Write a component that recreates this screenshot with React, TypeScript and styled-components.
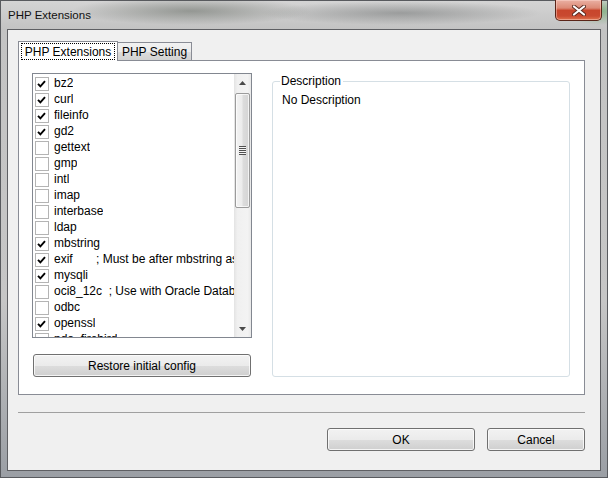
import React from "react";
import styled, { createGlobalStyle } from "styled-components";

const Global = createGlobalStyle`
  html, body { margin: 0; padding: 0; }
  body {
    width: 608px; height: 478px; overflow: hidden;
    font-family: "Liberation Sans", Arial, sans-serif;
    font-size: 12px; color: #000;
  }
  * { box-sizing: border-box; }
`;

const Window = styled.div`
  width: 608px;
  height: 478px;
  display: flex;
  flex-direction: column;
  border: 1px solid #585a5e;
  padding: 0 6px 6px 6px;
  background:
    radial-gradient(ellipse 120px 14px at 190px 10px, rgba(90, 96, 88, 0.5), transparent),
    radial-gradient(ellipse 140px 12px at 400px 12px, rgba(80, 84, 84, 0.4), transparent),
    radial-gradient(ellipse 40px 14px at 600px 10px, rgba(70, 150, 70, 0.5), transparent),
    linear-gradient(180deg, #d4d4d4 0px, #c3c3c3 28px, #c6c6c6 300px, #9a9ea4 478px);
`;

const TitleBar = styled.div`
  height: 28px;
  display: flex;
  align-items: flex-start;
  justify-content: space-between;
`;

const TitleText = styled.div`
  padding: 7px 0 0 1px;
  font-size: 11.5px;
  line-height: 14px;
  color: #111;
`;

const CloseButton = styled.div`
  width: 47px;
  height: 21px;
  margin: -1px -1px 0 0;
  border: 1px solid #5a2418;
  border-top: none;
  border-radius: 0 0 5px 5px;
  background: linear-gradient(180deg, #eab0a3 0%, #dc8a76 40%, #c8462c 52%, #c94a30 80%, #e0754f 100%);
  box-shadow: inset 0 0 0 1px rgba(255, 220, 210, 0.45);
  display: flex;
  align-items: center;
  justify-content: center;
`;

const Client = styled.div`
  flex: 1;
  display: flex;
  flex-direction: column;
  background: #f0f0f0;
  border: 1px solid #5e5f63;
  padding: 11px 15px 19px 10px;
`;

const TabStrip = styled.div`
  display: flex;
  align-items: flex-end;
  height: 20px;
  margin-bottom: -1px;
  position: relative;
  z-index: 1;
`;

const Tab = styled.div<{ $active?: boolean; $w: number }>`
  width: ${(p) => p.$w}px;
  height: ${(p) => (p.$active ? 20 : 18)}px;
  margin-bottom: ${(p) => (p.$active ? 0 : 1)}px;
  border: 1px solid #898c95;
  border-bottom: none;
  ${(p) => (p.$active ? "" : "border-left: none;")}
  background: ${(p) =>
    p.$active
      ? "#ffffff"
      : "linear-gradient(180deg, #f2f2f2 0%, #ebebeb 50%, #dddddd 51%, #d2d2d2 100%)"};
  padding: ${(p) => (p.$active ? "1px 2px 1px 2px" : "0")};
  display: flex;
  align-items: ${(p) => (p.$active ? "stretch" : "center")};
  justify-content: center;
  line-height: 14px;
`;

const FocusRect = styled.div`
  flex: 1;
  border: 1px dotted #000;
  display: flex;
  align-items: center;
  justify-content: center;
  height: 17px;
`;

const TabPanel = styled.div`
  display: flex;
  gap: 20px;
  border: 1px solid #898c95;
  background: #ffffff;
  padding: 12px 14px 17px 13px;
`;

const LeftColumn = styled.div`
  width: 220px;
  display: flex;
  flex-direction: column;
  gap: 16px;
`;

const ListBox = styled.div`
  height: 265px;
  border: 1px solid #828790;
  background: #fff;
  display: flex;
`;

const ListRows = styled.div`
  flex: 1;
  overflow: hidden;
  padding: 1px 0 0 2px;
`;

const Row = styled.div`
  height: 16px;
  display: flex;
  align-items: flex-start;
`;

const CheckBox = styled.div`
  width: 14px;
  height: 14px;
  margin: 2px 5px 0 0;
  border: 1px solid #b4b4b4;
  background: #fff;
  flex: none;
  display: flex;
  align-items: center;
  justify-content: flex-start;
  padding-left: 1px;
`;

const Label = styled.div`
  white-space: pre;
  line-height: 17px;
  overflow: hidden;
`;

const ScrollBar = styled.div`
  width: 17px;
  flex: none;
  display: flex;
  flex-direction: column;
  background: linear-gradient(90deg, #e3e3e3 0%, #f0f0f0 20%, #f3f3f3 80%, #e8e8e8 100%);
`;

const ScrollButton = styled.div`
  height: 17px;
  display: flex;
  align-items: center;
  justify-content: center;
`;

const ScrollTrack = styled.div`
  flex: 1;
  padding: 2px 1px 0 1px;
`;

const Thumb = styled.div`
  height: 115px;
  border: 1px solid #9b9b9b;
  border-radius: 2px;
  background: linear-gradient(90deg, #f3f3f3 0%, #ececec 45%, #dcdcdc 55%, #d4d4d4 100%);
  box-shadow: inset 0 0 0 1px rgba(255, 255, 255, 0.7);
  display: flex;
  align-items: center;
  justify-content: center;
`;

const Grip = styled.div`
  width: 7px;
  height: 9px;
  background: repeating-linear-gradient(180deg, #505050 0px, #505050 1px, #f4f4f4 1px, #f4f4f4 2px);
`;

const PushButton = styled.button<{ $w?: number }>`
  ${(p) => (p.$w ? `width: ${p.$w}px;` : "")}
  height: 23px;
  padding: 0;
  margin: 0;
  border: 1px solid #707070;
  border-radius: 3px;
  background: linear-gradient(180deg, #f2f2f2 0%, #ebebeb 50%, #dddddd 51%, #cfcfcf 100%);
  box-shadow: inset 0 0 0 1px rgba(252, 252, 252, 0.8);
  font-family: "Liberation Sans", Arial, sans-serif;
  font-size: 12px;
  color: #000;
  line-height: 14px;
`;

const RestoreButton = styled(PushButton)`
  margin: 0 1px;
`;

const GroupBox = styled.fieldset`
  flex: 1;
  margin: 1px 0 0 0;
  border: 1px solid #d5dfe5;
  border-radius: 3px;
  padding: 5px 7px 0 8px;
  min-width: 0;
`;

const GroupLegend = styled.legend`
  padding: 0 2px 0 1px;
  margin-left: -1px;
  line-height: 14px;
  font-size: 12px;
`;

const GroupText = styled.div`
  line-height: 14px;
  padding-left: 1px;
`;

const Separator = styled.div`
  height: 1px;
  background: #a0a0a0;
  margin: 17px 0 15px 0;
`;

const ButtonRow = styled.div`
  display: flex;
  justify-content: flex-end;
  gap: 12px;
`;

const extensions: { name: string; on: boolean }[] = [
  { name: "bz2", on: true },
  { name: "curl", on: true },
  { name: "fileinfo", on: true },
  { name: "gd2", on: true },
  { name: "gettext", on: false },
  { name: "gmp", on: false },
  { name: "intl", on: false },
  { name: "imap", on: false },
  { name: "interbase", on: false },
  { name: "ldap", on: false },
  { name: "mbstring", on: true },
  { name: "exif       ; Must be after mbstring as it depends on it", on: true },
  { name: "mysqli", on: true },
  { name: "oci8_12c  ; Use with Oracle Database 12c Instant Client", on: false },
  { name: "odbc", on: false },
  { name: "openssl", on: true },
  { name: "pdo_firebird", on: false },
  { name: "pdo_mysql", on: true },
];

const Check = () => (
  <svg width="9" height="8" viewBox="0 0 9 8">
    <path d="M1 3.8 L3.4 6.3 L8 1.2" fill="none" stroke="#000" strokeWidth="1.9" />
  </svg>
);

const Arrow = ({ down }: { down?: boolean }) => (
  <svg width="7" height="4" viewBox="0 0 7 4">
    <path d={down ? "M0 0 H7 L3.5 4 Z" : "M0 4 H7 L3.5 0 Z"} fill="#4a4a4a" />
  </svg>
);

const CloseGlyph = () => (
  <svg width="14" height="11" viewBox="0 0 14 11">
    <path d="M2 1.5 L12 9.5 M12 1.5 L2 9.5" stroke="#5a2a20" strokeWidth="4" strokeLinecap="round" />
    <path d="M2 1.5 L12 9.5 M12 1.5 L2 9.5" stroke="#ffffff" strokeWidth="2.2" strokeLinecap="round" />
  </svg>
);

export default function App() {
  return (
    <>
      <Global />
      <Window>
        <TitleBar>
          <TitleText>PHP Extensions</TitleText>
          <CloseButton>
            <CloseGlyph />
          </CloseButton>
        </TitleBar>
        <Client>
          <TabStrip>
            <Tab $active $w={100}>
              <FocusRect>PHP Extensions</FocusRect>
            </Tab>
            <Tab $w={74}>PHP Setting</Tab>
          </TabStrip>
          <TabPanel>
            <LeftColumn>
              <ListBox>
                <ListRows>
                  {extensions.map((e) => (
                    <Row key={e.name}>
                      <CheckBox>{e.on && <Check />}</CheckBox>
                      <Label>{e.name}</Label>
                    </Row>
                  ))}
                </ListRows>
                <ScrollBar>
                  <ScrollButton>
                    <Arrow />
                  </ScrollButton>
                  <ScrollTrack>
                    <Thumb>
                      <Grip />
                    </Thumb>
                  </ScrollTrack>
                  <ScrollButton>
                    <Arrow down />
                  </ScrollButton>
                </ScrollBar>
              </ListBox>
              <RestoreButton>Restore initial config</RestoreButton>
            </LeftColumn>
            <GroupBox>
              <GroupLegend>Description</GroupLegend>
              <GroupText>No Description</GroupText>
            </GroupBox>
          </TabPanel>
          <Separator />
          <ButtonRow>
            <PushButton $w={148}>OK</PushButton>
            <PushButton $w={98}>Cancel</PushButton>
          </ButtonRow>
        </Client>
      </Window>
    </>
  );
}
